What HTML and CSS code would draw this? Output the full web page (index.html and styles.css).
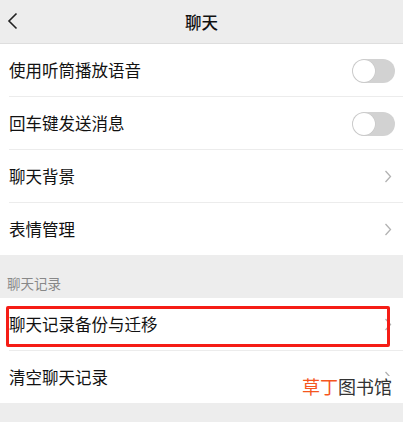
FILE: index.html
```html
<!DOCTYPE html>
<html lang="zh-CN">
<head>
<meta charset="utf-8">
<title>聊天</title>
<link rel="stylesheet" href="styles.css">
</head>
<body>
<div class="page">
  <header class="topbar">
    <svg class="back" width="12" height="18" viewBox="0 0 12 18"><polyline points="9.5,1.5 2,9 9.5,16.5" fill="none" stroke="#222" stroke-width="1.6" stroke-linejoin="miter"/></svg>
    <div class="title">聊天</div>
  </header>

  <div class="list">
    <div class="row"><span class="label">使用听筒播放语音</span><span class="switch"><span class="knob"></span></span></div>
    <div class="row"><span class="label">回车键发送消息</span><span class="switch"><span class="knob"></span></span></div>
    <div class="row"><span class="label">聊天背景</span><svg class="chev" width="8" height="13" viewBox="0 0 8 13"><polyline points="1.5,1 6.5,6.5 1.5,12" fill="none" stroke="#b2b2b2" stroke-width="1.3"/></svg></div>
    <div class="row"><span class="label">表情管理</span><svg class="chev" width="8" height="13" viewBox="0 0 8 13"><polyline points="1.5,1 6.5,6.5 1.5,12" fill="none" stroke="#b2b2b2" stroke-width="1.3"/></svg></div>
  </div>

  <div class="section">聊天记录</div>

  <div class="list">
    <div class="row"><span class="label">聊天记录备份与迁移</span><svg class="chev" width="8" height="13" viewBox="0 0 8 13"><polyline points="1.5,1 6.5,6.5 1.5,12" fill="none" stroke="#b2b2b2" stroke-width="1.3"/></svg><span class="highlight"></span></div>
    <div class="row"><span class="label">清空聊天记录</span><svg class="chev" width="8" height="13" viewBox="0 0 8 13"><polyline points="1.5,1 6.5,6.5 1.5,12" fill="none" stroke="#b2b2b2" stroke-width="1.3"/></svg></div>
  </div>

  <div class="watermark"><span class="wm-a">草丁</span><span class="wm-b">图书馆</span></div>
</div>
</body>
</html>
```

FILE: styles.css
```css
html, body {
  margin: 0;
  padding: 0;
  background: #ededed;
}
body {
  font-family: "Noto Sans CJK SC", "Noto Sans", sans-serif;
  color: #111;
}
.page {
  position: relative;
  width: 403px;
  height: 422px;
  overflow: hidden;
  background: #ededed;
}
.topbar {
  position: relative;
  height: 43px;
  border-bottom: 1px solid #dedede;
  display: flex;
  align-items: center;
  justify-content: center;
  background: #ededed;
}
.back {
  position: absolute;
  left: 7px;
  top: 12px;
}
.title {
  font-size: 16.5px;
  font-weight: 500;
  line-height: 20px;
  color: #111;
}
.list {
  background: #fff;
  padding-left: 9px;
}
.row {
  position: relative;
  height: 52px;
  display: flex;
  align-items: center;
  justify-content: space-between;
  padding-right: 8px;
}
.row + .row {
  border-top: 1px solid #ececec;
}
.label {
  font-size: 16.5px;
  line-height: 20px;
  color: #111;
}
.chev {
  margin-right: 3px;
}
.switch {
  position: relative;
  width: 43px;
  height: 24px;
  border-radius: 12px;
  background: #d2d2d2;
  box-sizing: border-box;
  margin-top: 1px;
}
.knob {
  position: absolute;
  left: 1px;
  top: 1px;
  width: 22px;
  height: 22px;
  border-radius: 50%;
  background: #fff;
  box-shadow: 0 0 0 0.5px #c4c4c4;
}
.section {
  height: 43px;
  box-sizing: border-box;
  padding: 19px 0 0 7px;
  font-size: 13.5px;
  line-height: 18px;
  color: #888;
}
.highlight {
  position: absolute;
  left: -3px;
  top: 8px;
  width: 384px;
  height: 41px;
  box-sizing: border-box;
  border: 3px solid #f51d16;
  border-radius: 2px;
}
.watermark {
  position: absolute;
  left: 302px;
  top: 376px;
  background: #fff;
  font-size: 18px;
  line-height: 20px;
  letter-spacing: 0;
}
.wm-a {
  color: #f5561e;
}
.wm-b {
  color: #333;
}
```
